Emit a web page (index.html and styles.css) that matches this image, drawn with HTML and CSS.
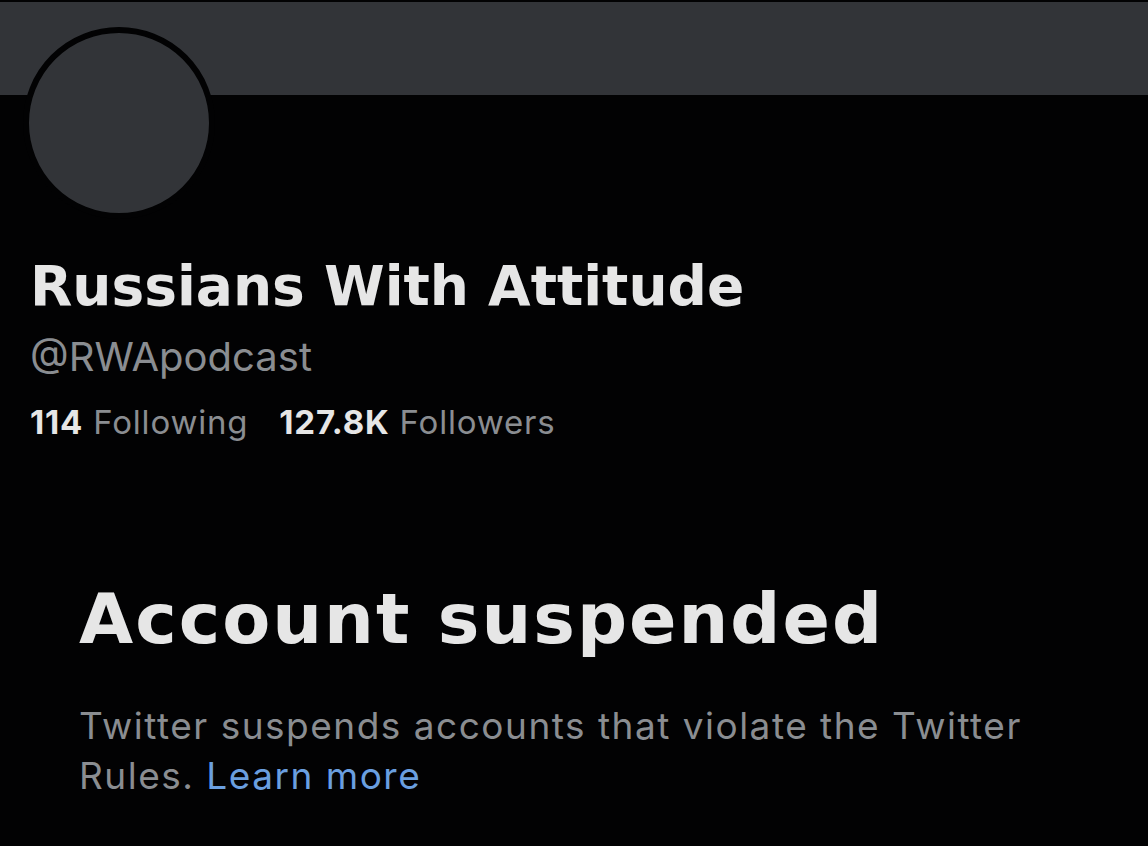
FILE: index.html
```html
<!DOCTYPE html>
<html>
<head>
    <meta charset="utf-8">
    <title>Russians With Attitude (@RWApodcast)</title>
    <link rel="stylesheet" href="styles.css">
</head>
<body>

<div class="banner"></div>

<div class="profile">
    <div class="avatar"></div>

    <h1 class="name">Russians With Attitude</h1>
    <div class="handle">@RWApodcast</div>

    <div class="stats">
        <span class="stat"><b>114</b> Following</span>
        <span class="stat"><b>127.8K</b> Followers</span>
    </div>
</div>

<div class="notice">
    <h2>Account suspended</h2>
    <p>Twitter suspends accounts that violate the Twitter Rules. <a href="#">Learn more</a></p>
</div>

</body>
</html>
```

FILE: styles.css
```css
body {
    font-family: "Inter", "Liberation Sans", "Helvetica", sans-serif;
    background-color: #020203;
    color: #e6e6e6;
    margin: 0;
}

.banner {
    height: 93px;
    margin-top: 2px;
    background-color: #323438;
}

.profile {
    padding-left: 30px;
}

.avatar {
    width: 180px;
    height: 180px;
    margin: -68px 0 0 -7px;
    border: 6px solid #020203;
    border-radius: 50%;
    background-color: #323438;
}

/* bold headings: DejaVu is the widest heavy face we have */
.name {
    font-family: "DejaVu Sans", sans-serif;
    font-weight: 700;
    font-size: 55px;
    line-height: 60px;
    margin: 37px 0 0;
    color: #e6e6e6;
}

.handle {
    font-size: 40px;
    line-height: 50px;
    margin-top: 16px;
    color: #8a8d91;
}

.stats {
    display: flex;
    gap: 31px;
    font-size: 33px;
    line-height: 40px;
    letter-spacing: 0.8px;
    margin-top: 20px;
    color: #8a8d91;
}

.stats b {
    color: #e6e6e6;
    font-weight: 700;
}

.notice {
    padding-left: 79px;
    width: 1000px;
}

.notice h2 {
    font-family: "DejaVu Sans", sans-serif;
    font-weight: 700;
    font-size: 70px;
    line-height: 76px;
    letter-spacing: 2px;
    margin: 139px 0 0;
    color: #e6e6e6;
}

.notice p {
    font-size: 37px;
    line-height: 50px;
    letter-spacing: 1.5px;
    margin: 44px 0 0;
    color: #8a8d91;
}

.notice a {
    color: #6a9fe0;
    text-decoration: none;
}
```
